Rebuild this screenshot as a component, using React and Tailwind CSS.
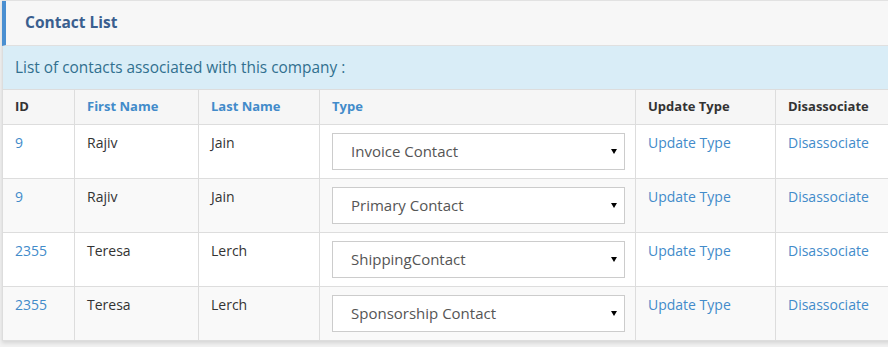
const CONTACTS = [
  { id: "9", first: "Rajiv", last: "Jain", type: "Invoice Contact" },
  { id: "9", first: "Rajiv", last: "Jain", type: "Primary Contact" },
  { id: "2355", first: "Teresa", last: "Lerch", type: "ShippingContact" },
  { id: "2355", first: "Teresa", last: "Lerch", type: "Sponsorship Contact" },
];

const TYPES = ["Invoice Contact", "Primary Contact", "ShippingContact", "Sponsorship Contact"];

function TypeSelect({ value }) {
  return (
    <div className="relative h-[37px] w-[293px]">
      <select
        defaultValue={value}
        className="h-full w-full appearance-none rounded-none border border-[#cccccc] bg-white pl-[18px] text-[15px] text-[#555555] outline-none"
      >
        {TYPES.map((t) => (
          <option key={t}>{t}</option>
        ))}
      </select>
      <span className="pointer-events-none absolute right-[8px] top-[16px] h-0 w-0 border-x-[3px] border-t-[5px] border-x-transparent border-t-black" />
    </div>
  );
}

export default function App() {
  return (
    <div
      className="h-[347px] w-[888px] overflow-hidden bg-[#f1f1f1]"
      style={{ fontFamily: '"Open Sans","Noto Sans",sans-serif' }}
    >
      <div className="ml-[2px] w-[900px] border-t border-[#e2e2e2] bg-white shadow-[0_2px_4px_rgba(0,0,0,0.12)]">
        <div className="flex h-[45px] items-center border-b border-[#e0e0e0] border-l-[4px] border-l-[#4a8fd1] bg-[#f7f7f7] pl-[19px]">
          <h3 className="text-[15.5px] font-bold text-[#3a5f8f]">Contact List</h3>
        </div>
        <div className="flex h-[43px] items-center border-l border-[#dddddd] bg-[#d9edf7] pl-[12px] text-[15.4px] text-[#31708f]">
          List of contacts associated with this company :
        </div>
        <table className="w-full table-fixed border-collapse border-l border-[#dddddd] text-[14px] text-[#333333]">
          <colgroup>
            <col className="w-[72px]" />
            <col className="w-[124px]" />
            <col className="w-[121px]" />
            <col className="w-[316px]" />
            <col className="w-[140px]" />
            <col />
          </colgroup>
          <thead>
            <tr className="h-[35px] bg-[#f6f6f6] text-left text-[13px] font-bold">
              <th className="border border-[#dddddd] px-3">ID</th>
              <th className="border border-[#dddddd] px-3 text-[#428bca]">First Name</th>
              <th className="border border-[#dddddd] px-3 text-[#428bca]">Last Name</th>
              <th className="border border-[#dddddd] px-3 text-[#428bca]">Type</th>
              <th className="border border-[#dddddd] px-3">Update Type</th>
              <th className="border border-[#dddddd] px-3">Disassociate</th>
            </tr>
          </thead>
          <tbody>
            {CONTACTS.map((c, idx) => (
              <tr key={idx} className={`h-[54px] align-top ${idx % 2 === 1 ? "bg-[#f9f9f9]" : "bg-white"}`}>
                <td className="border border-[#dddddd] px-3 pt-[8px] leading-[20px] text-[#428bca]">{c.id}</td>
                <td className="border border-[#dddddd] px-3 pt-[8px] leading-[20px]">{c.first}</td>
                <td className="border border-[#dddddd] px-3 pt-[8px] leading-[20px]">{c.last}</td>
                <td className="border border-[#dddddd] px-3 py-[8px]">
                  <TypeSelect value={c.type} />
                </td>
                <td className="border border-[#dddddd] px-3 pt-[8px] leading-[20px]">
                  <a href="#" className="text-[#428bca]">Update Type</a>
                </td>
                <td className="border border-[#dddddd] px-3 pt-[8px] leading-[20px]">
                  <a href="#" className="text-[#428bca]">Disassociate</a>
                </td>
              </tr>
            ))}
          </tbody>
        </table>
      </div>
    </div>
  );
}
